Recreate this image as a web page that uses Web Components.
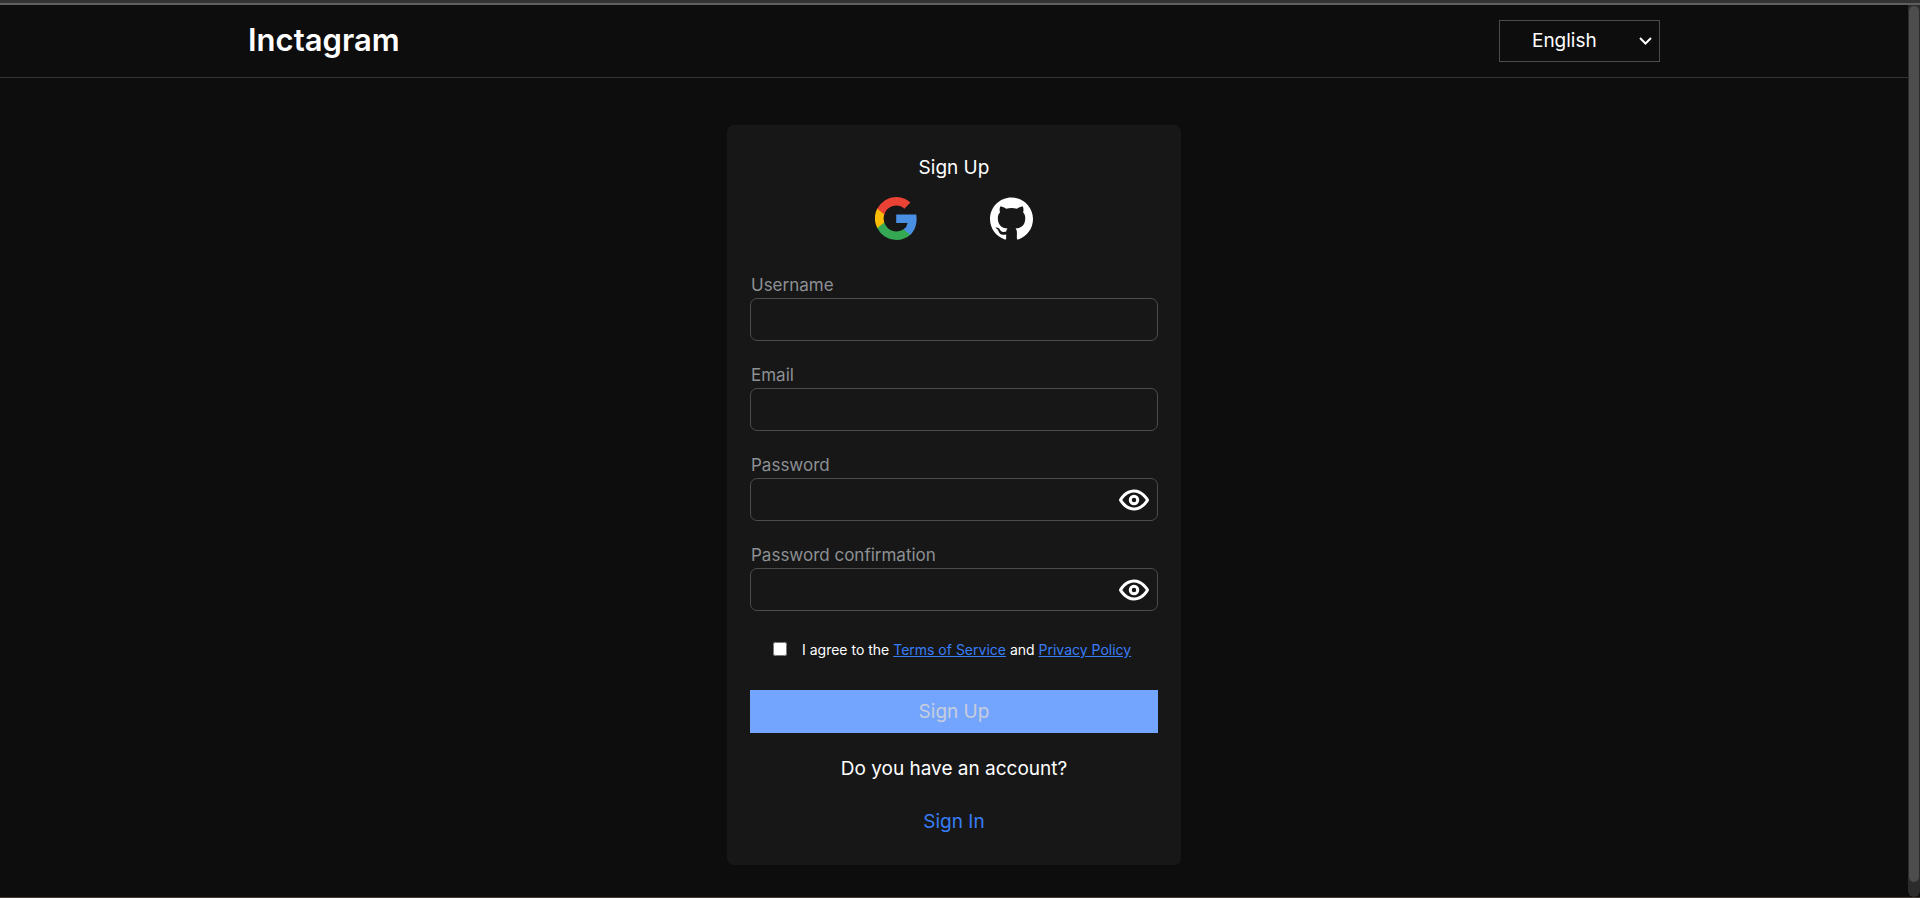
<!DOCTYPE html>
<html lang="en">
<head>
<meta charset="utf-8">
<meta name="viewport" content="width=device-width, initial-scale=1">
<title>Inctagram</title>
<style>
  body { margin: 0; background: #0d0d0d; color: #fff; font: 19px/24px Inter, "Liberation Sans", sans-serif; }
</style>
</head>
<body>
<app-shell>
  <app-header slot="header"></app-header>
  <sign-up-card>
    <social-links slot="social"></social-links>
    <text-field label="Username" name="username" type="text"></text-field>
    <text-field label="Email" name="email" type="email"></text-field>
    <text-field label="Password" name="password" type="password"></text-field>
    <text-field label="Password confirmation" name="confirmation" type="password"></text-field>
    <terms-check slot="terms"></terms-check>
  </sign-up-card>
</app-shell>
<script>
const define = (name, html, setup) => customElements.define(name, class extends HTMLElement {
  constructor() {
    super();
    this.attachShadow({ mode: 'open' }).innerHTML = html;
  }
  connectedCallback() { if (setup) setup(this, this.shadowRoot); }
});

define('app-shell', `
  <style>
    :host { display: flex; flex-direction: column; min-height: 100vh; box-sizing: border-box;
            border-bottom: 1px solid #45403b; }
    .edge { height: 3px; background: #333; border-bottom: 2px solid #5f5f5f; }
    .body { flex: 1; display: flex; }
    .page { flex: 1; min-width: 0; }
    main { display: flex; justify-content: center; padding: 47px 16px 32px; }
  </style>
  <div class="edge"></div>
  <div class="body">
    <div class="page"><slot name="header"></slot><main><slot></slot></main></div>
    <scroll-rail></scroll-rail>
  </div>`);

define('scroll-rail', `
  <style>
    :host { display: flex; width: 12px; box-sizing: border-box; padding: 1px 1px 15px; background: #2c2c2c;
            border-radius: 0 0 6px 6px; }
    div { flex: 1; border-radius: 5px; background: #4d4d4d; }
  </style>
  <div></div>`);

define('app-header', `
  <style>
    :host { display: flex; align-items: center; justify-content: space-between; height: 72px;
            padding: 0 13%; border-bottom: 1px solid #333; }
    h1 { margin: 0; padding-bottom: 2px; font-size: 31px; line-height: 36px; font-weight: 600; }
  </style>
  <h1>Inctagram</h1>
  <language-select></language-select>`);

define('language-select', `
  <style>
    :host { display: grid; width: 161px; height: 42px; align-items: center; }
    select, svg { grid-area: 1 / 1; }
    select { appearance: none; width: 100%; height: 100%; margin: 0; padding: 0 32px; border: 1px solid #4c4c4c;
             border-radius: 0; background: #0d0d0d; color: #fff; font: inherit; }
    svg { justify-self: end; margin-right: 8px; pointer-events: none; }
  </style>
  <select aria-label="Language"><option>English</option><option>Русский</option></select>
  <svg width="13" height="8" viewBox="0 0 13 8" fill="none" stroke="#fff" stroke-width="2"><path d="M1 1l5.500 5.500L12 1"/></svg>`);

define('sign-up-card', `
  <style>
    :host { display: block; width: 454px; box-sizing: border-box; padding: 31px 23px; border-radius: 7px;
            background: #171717; text-align: center; }
    h2 { margin: 0 0 17px; font: inherit; }
    form { display: flex; flex-direction: column; }
    .fields { display: grid; gap: 22px; margin: 33px 0 27px; text-align: left; }
    button { height: 43px; margin: 28px 0 24px; padding: 0; border: 0; background: #73a5ff; color: #c8cddc; font: inherit; }
    p { margin: 0 0 29px; }
    a { color: #397df6; text-decoration: none; }
  </style>
  <form>
    <h2>Sign Up</h2>
    <slot name="social"></slot>
    <div class="fields"><slot></slot></div>
    <slot name="terms"></slot>
    <button type="submit" disabled>Sign Up</button>
    <p>Do you have an account?</p>
    <div><a href="#sign-in">Sign In</a></div>
  </form>`);

define('social-links', `
  <style>
    :host { display: flex; justify-content: center; gap: 73px; }
    a { display: block; height: 43px; }
    svg { display: block; }
  </style>
  <a href="#google" aria-label="Sign up with Google"><svg width="42" height="43" viewBox="0 0 48 48" preserveAspectRatio="none">
    <path fill="#4a90e2" d="M47.530 24.550c0-1.630-.14-3.270-.42-4.880H24.240v9.250h13.100a11.200 11.200 0 0 1-4.860 7.380v6h7.820c4.590-4.220 7.230-10.450 7.230-17.750z"/>
    <path fill="#34a853" d="M24.240 48c6.550 0 12.070-2.150 16.090-5.860l-7.820-6.060c-2.180 1.480-4.980 2.320-8.260 2.320-6.330 0-11.700-4.270-13.630-10.020H2.560v6.250A24.280 24.280 0 0 0 24.240 48z"/>
    <path fill="#fbbc05" d="M10.610 28.380a14.500 14.500 0 0 1 0-9.200v-6.250H2.560a24 24 0 0 0 0 21.700z"/>
    <path fill="#ea4335" d="M24.240 9.500c3.460-.06 6.800 1.240 9.310 3.610l6.940-6.860A23.400 23.400 0 0 0 24.240 0 24.280 24.280 0 0 0 2.560 13.240l8.050 6.190C12.530 13.670 17.920 9.500 24.240 9.500z"/>
  </svg></a>
  <a href="#github" aria-label="Sign up with GitHub"><svg width="43" height="43" viewBox="0 0 16 16"><path fill="#fff" d="M8 .2C3.580.2 0 3.780 0 8.200c0 3.540 2.290 6.530 5.470 7.590.4.070.55-.17.55-.38 0-.19-.01-.82-.01-1.490-2.010.37-2.530-.49-2.690-.94-.09-.23-.48-.94-.82-1.130-.28-.15-.68-.52-.01-.53.63-.01 1.080.58 1.230.82.72 1.210 1.870.87 2.330.66.07-.52.28-.87.51-1.070-1.780-.2-3.640-.89-3.640-3.950 0-.87.31-1.590.82-2.150-.08-.2-.36-1.020.08-2.120 0 0 .67-.21 2.200.82.64-.18 1.320-.27 2-.27s1.360.09 2 .27c1.530-1.040 2.200-.82 2.200-.82.44 1.100.16 1.920.08 2.120.51.56.82 1.270.82 2.150 0 3.070-1.870 3.750-3.650 3.950.29.25.54.73.54 1.480 0 1.070-.01 1.930-.01 2.200 0 .21.15.46.55.38A8.010 8.010 0 0 0 16 8.200C16 3.780 12.420.2 8 .2z"/></svg></a>`);

define('text-field', `
  <style>
    :host { display: block; font-size: 17px; }
    label { display: block; padding: 0 0 1px 1px; color: #8d9094; }
    .box { display: flex; align-items: center; height: 43px; box-sizing: border-box; border: 1px solid #4c4c4c; border-radius: 7px; }
    input { flex: 1; min-width: 0; height: 100%; box-sizing: border-box; padding: 0 12px; border: 0; outline: 0;
            background: none; color: #fff; font: inherit; }
    button { padding: 0; margin-right: 5px; border: 0; background: none; }
    svg { display: block; }
  </style>
  <label for="control"></label>
  <div class="box"><input id="control"></div>`,
  (host, root) => {
    const input = root.querySelector('input');
    root.querySelector('label').textContent = host.getAttribute('label');
    input.name = host.getAttribute('name');
    input.type = host.getAttribute('type');
    if (input.type !== 'password' || root.querySelector('button')) return;
    const eye = document.createElement('button');
    eye.type = 'button';
    eye.setAttribute('aria-label', 'Show password');
    eye.innerHTML = `<svg width="36" height="36" viewBox="0 0 24 24" fill="#fff"><path d="M21.870 11.500c-.64-1.110-4.160-6.680-10.140-6.500-5.530.14-8.730 5-9.600 6.500a1 1 0 0 0 0 1c.63 1.090 4 6.500 9.890 6.500h.25c5.530-.14 8.740-5 9.600-6.500a1 1 0 0 0 0-1zM12.220 17c-4.310.1-7.120-3.590-8-5 1-1.610 3.610-4.900 7.610-5 4.290-.11 7.110 3.590 8 5-1.030 1.610-3.610 4.900-7.610 5z"/><path d="M12 8.500a3.500 3.500 0 1 0 3.500 3.500A3.500 3.500 0 0 0 12 8.500zm0 5a1.500 1.500 0 1 1 1.500-1.500 1.500 1.500 0 0 1-1.500 1.500z"/></svg>`;
    eye.onclick = () => { input.type = input.type === 'password' ? 'text' : 'password'; };
    root.querySelector('.box').append(eye);
  });

define('terms-check', `
  <style>
    :host { display: flex; align-items: center; padding-left: 23px; font-size: 14px; text-align: left; white-space: nowrap; }
    input { width: 14px; height: 14px; margin: 0 15px 2px 0; }
    a { color: #397df6; text-decoration: underline; }
  </style>
  <input type="checkbox" id="agree">
  <label for="agree">I agree to the <a href="#terms">Terms of Service</a> and <a href="#privacy">Privacy Policy</a></label>`);
</script>
</body>
</html>
